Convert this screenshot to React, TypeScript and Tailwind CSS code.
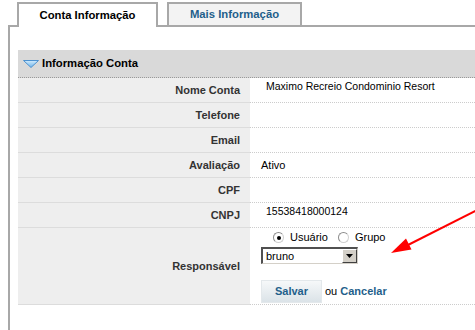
type Row = {
  label: string;
  value?: string;
  align?: 'top' | 'middle';
};

const rows: Row[] = [
  { label: 'Nome Conta', value: 'Maximo Recreio Condominio Resort', align: 'top' },
  { label: 'Telefone' },
  { label: 'Email' },
  { label: 'Avaliação', value: 'Ativo', align: 'middle' },
  { label: 'CPF' },
  { label: 'CNPJ', value: '15538418000124', align: 'top' },
];

function Radio({ checked }: { checked?: boolean }) {
  return (
    <span className="w-[11px] h-[11px] rounded-full border border-[#8c8c8c] border-b-[#d0d0d0] border-r-[#d0d0d0] bg-white flex items-center justify-center shrink-0">
      {checked && <span className="w-[4px] h-[4px] rounded-full bg-black" />}
    </span>
  );
}

function FakeSelect() {
  return (
    <div className="w-[97px] h-[17px] flex bg-white border-t-2 border-l-2 border-b border-r border-t-[#505050] border-l-[#505050] border-b-[#d4d0c8] border-r-[#d4d0c8]">
      <div className="flex-1 flex items-center pl-[3px] text-[11px] text-black leading-none">bruno</div>
      <div className="w-[15px] h-full bg-[#d4d0c8] border-t border-l border-white border-b border-r border-b-[#404040] border-r-[#404040] flex items-center justify-center">
        <svg width="7" height="4" viewBox="0 0 7 4">
          <polygon points="0,0 7,0 3.5,4" fill="#000" />
        </svg>
      </div>
    </div>
  );
}

export default function App() {
  return (
    <div className="relative w-[475px] h-[330px] overflow-hidden bg-white font-['Liberation_Sans',Arial,sans-serif]">
      <div className="pt-[2px] pl-[8px] h-full flex flex-col">
        {/* tabs */}
        <div className="flex items-start pl-[9px] gap-[9px] relative z-10 -mb-[2px]">
          <div className="w-[141px] h-[25px] border-2 border-b-0 border-[#a8a8a8] bg-white flex items-center justify-center pb-[1px] text-[11.3px] font-bold text-black">
            Conta Informação
          </div>
          <div className="w-[135px] h-[23px] border-2 border-b-0 border-[#a8a8a8] bg-[#f3f3f3] flex items-center justify-center text-[11.3px] font-bold text-[#1f5f8b]">
            Mais Informação
          </div>
        </div>

        {/* frame */}
        <div className="flex-1 border-l-2 border-t-2 border-[#a8a8a8] pt-[23px] pl-[8px]">
          <div className="h-[28px] bg-[#d9d9d9] border-b border-dotted border-[#999999] flex items-center pl-[5px] gap-[3px]">
            <svg width="16" height="8" viewBox="0 0 16 8">
              <defs>
                <linearGradient id="tri" x1="0" y1="0" x2="0" y2="1">
                  <stop offset="0" stopColor="#d2ebfc" />
                  <stop offset="1" stopColor="#6fb4ea" />
                </linearGradient>
              </defs>
              <polygon points="0.5,0.5 15.5,0.5 8,7.5" fill="url(#tri)" stroke="#4d91cf" strokeWidth="1" strokeLinejoin="round" />
            </svg>
            <span className="text-[11.3px] font-bold text-black">Informação Conta</span>
          </div>

          <div className="grid grid-cols-[232px_1fr]">
            {rows.map((r) => (
              <div key={r.label} className="contents">
                <div className="h-[25px] bg-[#eeeeee] border-b border-[#dcdcdc] flex items-center justify-end pr-[10px] text-[11px] font-bold text-[#333333]">
                  {r.label}
                </div>
                <div
                  className={
                    r.align === 'middle'
                      ? 'h-[25px] border-b border-dotted border-[#cccccc] flex items-center pl-[11px] text-[11px] text-black'
                      : 'h-[25px] border-b border-dotted border-[#cccccc] pl-[16px] pt-[2px] text-[10.5px] leading-[12px] text-black'
                  }
                >
                  {r.value}
                </div>
              </div>
            ))}

            <div className="h-[77px] bg-[#eeeeee] border-b border-[#dcdcdc] flex items-center justify-end pr-[10px] text-[11px] font-bold text-[#333333]">
              Responsável
            </div>
            <div className="h-[77px] border-b border-dotted border-[#cccccc] pl-[11px] pt-[3px] flex flex-col items-start">
              <div className="h-[13px] flex items-center pl-[12px] text-[11px] text-black">
                <Radio checked />
                <span className="ml-[6px]">Usuário</span>
                <span className="ml-[10px]" />
                <Radio />
                <span className="ml-[6px]">Grupo</span>
              </div>
              <div className="mt-[3px]">
                <FakeSelect />
              </div>
              <div className="mt-[16px] flex items-center">
                <div className="w-[61px] h-[23px] bg-gradient-to-b from-[#f6f8f9] to-[#dbe3e8] border border-[#e3e8eb] flex items-center justify-center text-[11px] font-bold text-[#1f5f8b]">
                  Salvar
                </div>
                <span className="ml-[3px] text-[11px] text-black">ou</span>
                <span className="ml-[3px] text-[11px] font-bold text-[#1f5f8b]">Cancelar</span>
              </div>
            </div>
          </div>
        </div>
      </div>

      {/* red annotation arrow */}
      <svg className="absolute inset-0 pointer-events-none" width="475" height="330" viewBox="0 0 475 330">
        <line x1="477" y1="210" x2="404" y2="247" stroke="#ff0000" strokeWidth="2" />
        <polygon points="391,253 406,238.5 411.5,249.5" fill="#ff0000" />
      </svg>
    </div>
  );
}
